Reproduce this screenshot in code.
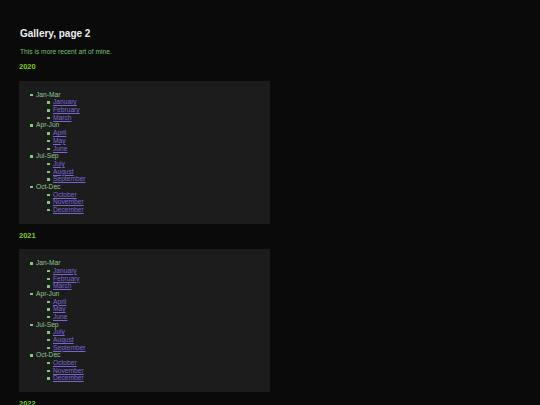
import React from 'react';

const quarters = [
    { label: 'Jan-Mar', months: ['January', 'February', 'March'] },
    { label: 'Apr-Jun', months: ['April', 'May', 'June'] },
    { label: 'Jul-Sep', months: ['July', 'August', 'September'] },
    { label: 'Oct-Dec', months: ['October', 'November', 'December'] },
];

// small square bullet, like the browser's disc at this size
const bullet =
    "relative before:content-[''] before:absolute before:left-[-6px] before:top-[3px] before:w-[2.5px] before:h-[2.5px] before:bg-[#7ccc7c]";

const YearBlock = ({ year }) => (
    <section>
        <h2 className="mt-[8px] mb-[9px] text-[7.5px] leading-[1.15] font-bold text-[#7ccf1f]">{year}</h2>
        <div className="w-[251px] bg-[#1c1c1c] py-[10px]">
            <ul className="pl-[17px]">
                {quarters.map((q) => (
                    <li key={q.label} className={`${bullet} text-[#8fc88f]`}>
                        {q.label}
                        <ul className="pl-[17px]">
                            {q.months.map((m) => (
                                <li key={m} className={bullet}>
                                    <a href="#" className="text-[#7a66d6] underline">{m}</a>
                                </li>
                            ))}
                        </ul>
                    </li>
                ))}
            </ul>
        </div>
    </section>
);

export default function App() {
    return (
        <div
            className="min-h-[405px] bg-[#0a0a0a] pl-[20px] pr-[19px] pt-[28px] text-[6.67px] leading-[1.15]"
            style={{ fontFamily: '"Liberation Sans", Arial, sans-serif' }}
        >
            <h1 className="text-[10px] leading-[1.15] font-bold text-[#eeeeee]">Gallery, page 2</h1>
            <p className="mt-[8px] mb-[1px] text-[#77c077]">This is more recent art of mine.</p>
            <div className="-ml-[1px]">
                <YearBlock year="2020" />
                <YearBlock year="2021" />
                <YearBlock year="2022" />
            </div>
        </div>
    );
}
